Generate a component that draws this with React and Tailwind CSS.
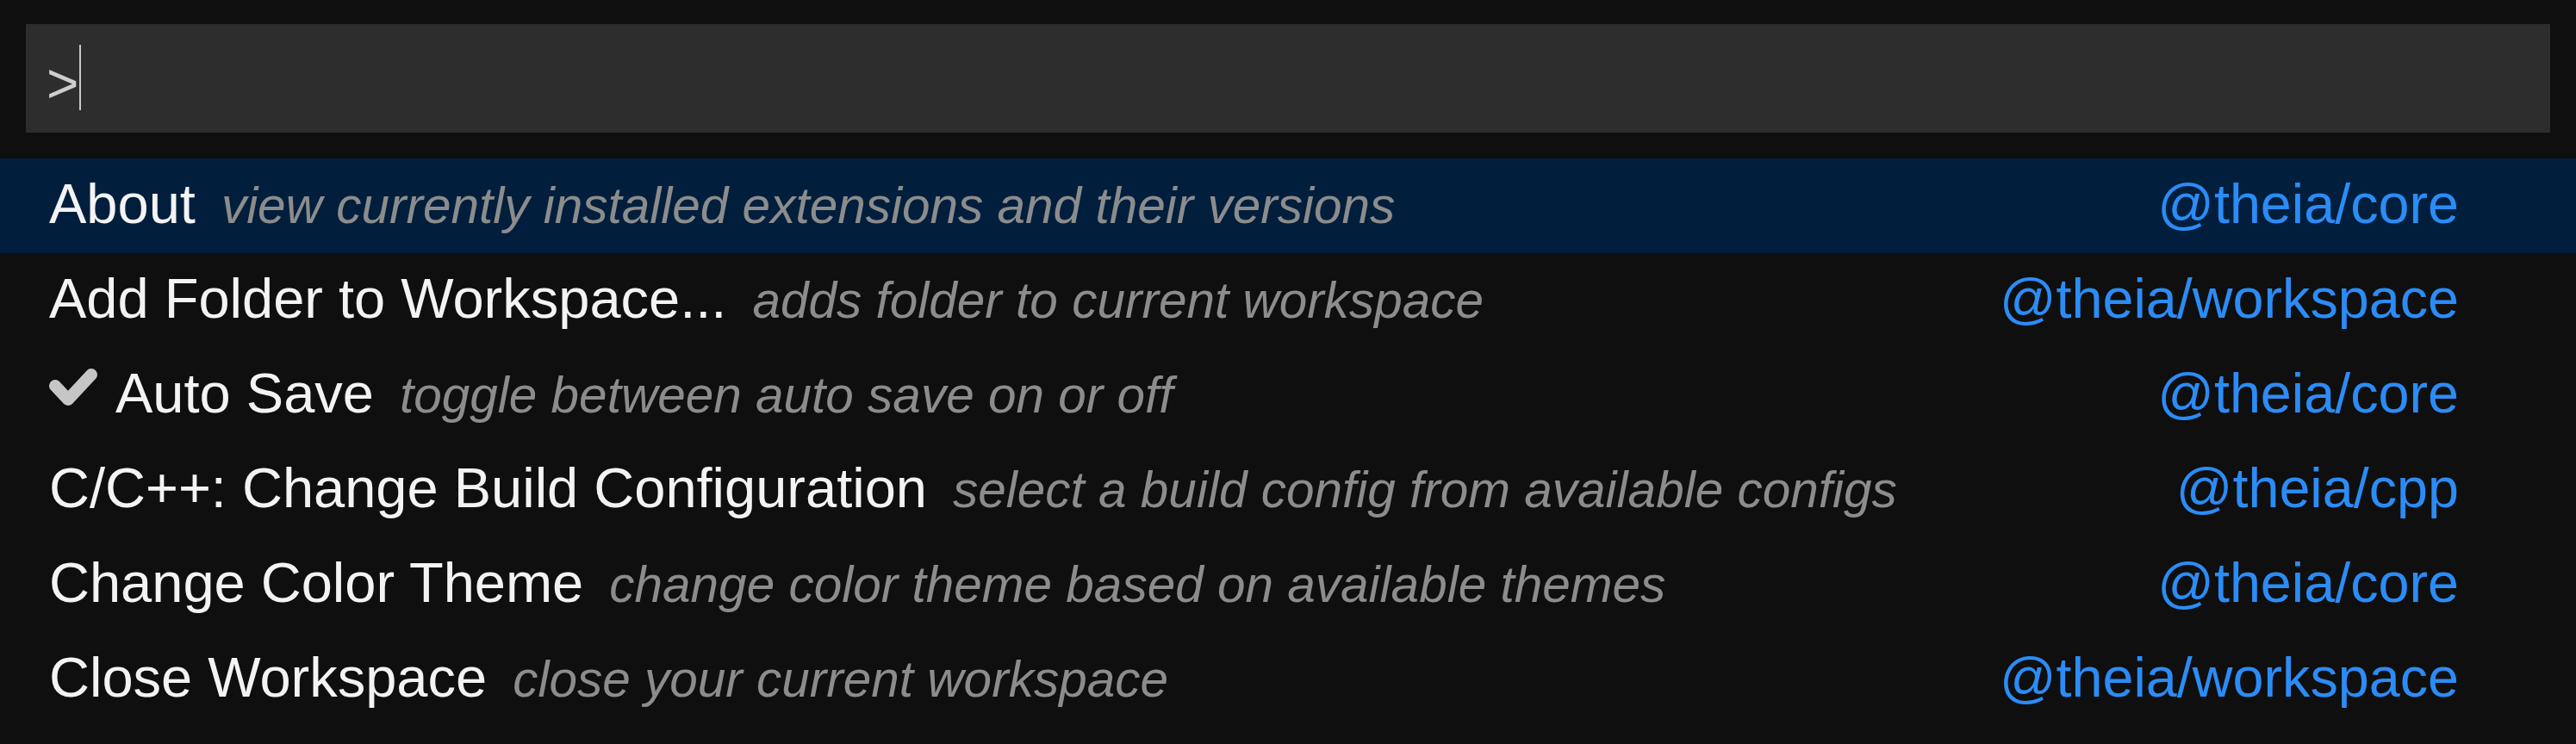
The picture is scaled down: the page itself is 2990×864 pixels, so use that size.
import React from 'react';

const ITEMS = [
  { label: 'About', desc: 'view currently installed extensions and their versions', pkg: '@theia/core', selected: true },
  { label: 'Add Folder to Workspace...', desc: 'adds folder to current workspace', pkg: '@theia/workspace' },
  { label: 'Auto Save', desc: 'toggle between auto save on or off', pkg: '@theia/core', checked: true },
  { label: 'C/C++: Change Build Configuration', desc: 'select a build config from available configs', pkg: '@theia/cpp' },
  { label: 'Change Color Theme', desc: 'change color theme based on available themes', pkg: '@theia/core' },
  { label: 'Close Workspace', desc: 'close your current workspace', pkg: '@theia/workspace' },
];

function Check() {
  return (
    <svg width="57" height="44" viewBox="0 0 57 44" className="mr-[20px] inline-block align-[7px]">
      <path d="M7 20 L22 36 L49 7" fill="none" stroke="#c6c6c6" strokeWidth="14" strokeLinecap="round" strokeLinejoin="round" />
    </svg>
  );
}

function Row({ item }) {
  return (
    <div className={`flex h-[110px] items-start pl-[57px] pr-[136px] ${item.selected ? 'bg-[#011f3d]' : ''}`}>
      <div className="flex flex-1 items-baseline whitespace-nowrap">
        <span className="text-[65px] leading-[106px] text-[#f3f3f3]">
          {item.checked && <Check />}
          {item.label}
        </span>
        <span className="ml-[30px] text-[58.5px] italic leading-[106px] text-[#8c8c8c]">{item.desc}</span>
      </div>
      <span className="text-[64.7px] leading-[106px] whitespace-nowrap text-[#2b8cf6]">{item.pkg}</span>
    </div>
  );
}

export default function App() {
  return (
    <div className="h-[864px] w-full overflow-hidden bg-[#0f0f0f] pt-[28px] font-['Liberation_Sans',Arial,sans-serif]">
      <div className="mx-[30px] flex h-[126px] items-start bg-[#2d2d2d] pl-[24px]">
        <span className="mt-[31px] text-[64px] leading-[76px] text-[#cdcdcd]">&gt;</span>
        <span className="ml-[1px] mt-[24px] h-[76px] w-[2px] bg-[#c8c8c8]" />
      </div>
      <div className="mt-[30px]">
        {ITEMS.map((item) => (
          <Row key={item.label} item={item} />
        ))}
      </div>
    </div>
  );
}
